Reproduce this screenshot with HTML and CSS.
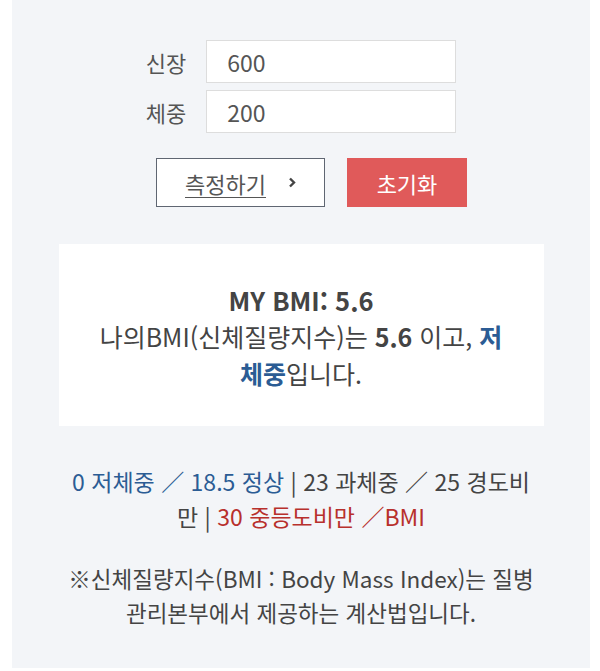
FILE: index.html
```html
<!DOCTYPE html>
<html lang="ko">
<head>
  <meta charset="UTF-8"/>
  <meta name="viewport" content="width=device-width,initial-scale=1"/>
  <title>BMI 계산기</title>
  <link rel="stylesheet" href="styles.css">
</head>
<body>

  <div class="bmi-panel">
    <form class="bmi-form">
      <div class="form-row">
        <label for="height">신장</label>
        <input type="text" id="height" value="600"/>
      </div>
      <div class="form-row">
        <label for="weight">체중</label>
        <input type="text" id="weight" value="200"/>
      </div>
      <div class="btn-row">
        <button type="button" class="btn-calc">
          <span>측정하기</span>
          <svg class="chev" width="8" height="11" viewBox="0 0 8 11"><polyline points="2,1.5 6,5.5 2,9.5" fill="none" stroke="#444" stroke-width="2.4"/></svg>
        </button>
        <button type="reset" class="btn-reset">초기화</button>
      </div>
    </form>

    <div class="result-box">
      <p class="result-title">MY BMI: 5.6</p>
      <p class="result-text">나의BMI(신체질량지수)는 <b>5.6</b> 이고, <b class="blue">저체중</b>입니다.</p>
    </div>

    <p class="legend">
      <span class="blue">0 저체중 ／ 18.5 정상</span> | 23 과체중 ／ 25 경도비만 | <span class="red">30 중등도비만 ／BMI</span>
    </p>

    <p class="note">※신체질량지수(BMI : Body Mass Index)는 질병관리본부에서 제공하는 계산법입니다.</p>
  </div>

</body>
</html>
```

FILE: styles.css
```css
body {
  margin:0; background:#fff; color:#444;
  font-family:"Noto Sans CJK KR", "Noto Sans", sans-serif;
}
.bmi-panel {
  margin:0 10px 0 12px; height:668px; background:#f3f5f8;
  padding-top:40px; box-sizing:border-box;
}
.bmi-form { display:flex; flex-direction:column; align-items:center; }
.form-row { display:flex; align-items:center; gap:20px; margin-bottom:7px; }
.form-row label { font-size:22px; line-height:30px; color:#555; }
.form-row input {
  width:250px; height:43px; box-sizing:border-box; border:1px solid #ddd;
  padding:0 20px; font-size:23px; color:#555; font-family:inherit; background:#fff;
}
.btn-row { display:flex; gap:22px; margin-top:18px; margin-left:21px; }
.btn-row button {
  height:49px; font-family:inherit; font-size:22px; cursor:pointer; padding:0;
}
.btn-calc {
  width:169px; background:#fff; border:1px solid #5f6672; color:#555;
  display:flex; align-items:center; justify-content:center; gap:22px;
}
.btn-calc span { text-decoration:underline; text-underline-offset:4px; text-decoration-thickness:1px; }
.btn-reset { width:120px; background:#e05a5a; border:none; color:#fff; font-size:21.5px; }

.result-box {
  margin:37px auto 0; width:485px; height:182px; background:#fff;
  box-sizing:border-box; padding:37px 31px 0; text-align:center;
}
.result-box p { margin:0; }
.result-title { font-size:25.5px; font-weight:bold; line-height:37px; color:#444; }
.result-text { font-size:25px; line-height:37px; color:#444; }
.result-text b { font-weight:bold; }
.blue { color:#2b5c94; }
.red { color:#b8302c; }

.legend {
  margin:38px 55px 0; font-size:23px; line-height:35px; text-align:center; color:#444;
}
.note {
  margin:27px 47px 0; font-size:22.5px; line-height:34px; text-align:center; color:#444;
}
```
